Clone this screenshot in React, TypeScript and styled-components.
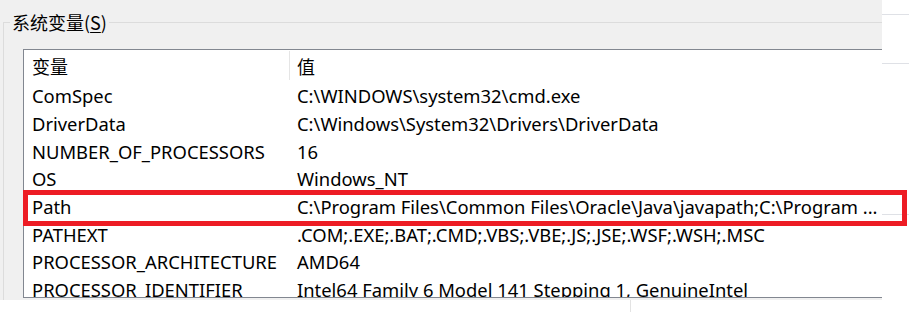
import * as React from 'react';
import styled, { createGlobalStyle } from 'styled-components';

const GlobalStyle = createGlobalStyle`
  body {
    margin: 0;
    background: #fff;
    font-family: 'Segoe UI', 'Noto Sans', 'Noto Sans CJK SC', sans-serif;
    color: #000;
  }
`;

const Screen = styled.div`
  position: relative;
  display: flex;
  flex-direction: column;
  width: 909px;
  height: 312px;
  overflow: hidden;
`;

const TopArea = styled.div`
  display: flex;
  height: 300px;
`;

const DialogPane = styled.div`
  width: 882px;
  padding: 12px 0 0 3px;
  box-sizing: border-box;
  background: #f0f0f0;
`;

const GroupBox = styled.fieldset`
  margin: 0;
  padding: 0 0 0 19px;
  height: 100%;
  min-width: 0;
  box-sizing: border-box;
  border: none;
  border-top: 1px solid #dcdcdc;
  border-left: 1px solid #dcdcdc;
`;

const GroupLabel = styled.legend`
  margin-left: -13px;
  padding: 0 2px;
  font-family: 'Noto Sans CJK SC', sans-serif;
  font-size: 18px;
  line-height: 20px;

  u {
    text-underline-offset: 2px;
  }
`;

const ListBox = styled.div`
  margin-top: 17px;
  height: 249px;
  box-sizing: border-box;
  overflow: hidden;
  background: #fff;
  border: 1px solid #828790;
  border-right: none;
`;

const Grid = styled.div`
  display: grid;
  grid-template-columns: 266px 1fr;
  grid-template-rows: 32px;
  grid-auto-rows: 27.7px;
`;

const HeaderCell = styled.div<{ $divider?: boolean }>`
  display: flex;
  align-items: center;
  margin-top: 1px;
  height: 29px;
  padding-left: ${(p) => (p.$divider ? '8px' : '7px')};
  font-family: 'Noto Sans CJK SC', sans-serif;
  font-size: 18px;
  box-shadow: ${(p) => (p.$divider ? 'inset -1px 0 0 #e5e5e5' : 'none')};
`;

const Cell = styled.div<{ $first?: boolean }>`
  display: flex;
  align-items: center;
  padding-left: ${(p) => (p.$first ? '8px' : '7px')};
  font-size: 18.4px;
  white-space: nowrap;
  overflow: hidden;
`;

const RightStrip = styled.div`
  display: flex;
  flex-direction: column;
  flex: 1;
  background: #fff;
`;

const StripLine = styled.div<{ $gap: number }>`
  margin-top: ${(p) => p.$gap}px;
  height: 1px;
  background: #dfe1e6;
`;

const BottomArea = styled.div`
  flex: 1;
  background: #fff;
  padding-left: 630px;
`;

const Tick = styled.div`
  width: 1px;
  height: 100%;
  background: #e3e3e3;
`;

// red annotation frame drawn over the Path row
const Highlight = styled.div`
  position: absolute;
  left: 23px;
  top: 190px;
  width: 884px;
  height: 36px;
  box-sizing: border-box;
  border: 5px solid #ed1c24;
  pointer-events: none;
`;

const rows: [string, string][] = [
  ['ComSpec', 'C:\\WINDOWS\\system32\\cmd.exe'],
  ['DriverData', 'C:\\Windows\\System32\\Drivers\\DriverData'],
  ['NUMBER_OF_PROCESSORS', '16'],
  ['OS', 'Windows_NT'],
  ['Path', 'C:\\Program Files\\Common Files\\Oracle\\Java\\javapath;C:\\Program ...'],
  ['PATHEXT', '.COM;.EXE;.BAT;.CMD;.VBS;.VBE;.JS;.JSE;.WSF;.WSH;.MSC'],
  ['PROCESSOR_ARCHITECTURE', 'AMD64'],
  ['PROCESSOR_IDENTIFIER', 'Intel64 Family 6 Model 141 Stepping 1, GenuineIntel']
];

const App: React.FunctionComponent = () => {
  return (
    <Screen>
      <GlobalStyle />
      <TopArea>
        <DialogPane>
          <GroupBox>
            <GroupLabel>
              系统变量(<u>S</u>)
            </GroupLabel>
            <ListBox>
              <Grid>
                <HeaderCell $divider>变量</HeaderCell>
                <HeaderCell>值</HeaderCell>
                {rows.map(([name, value]) => (
                  <React.Fragment key={name}>
                    <Cell $first>{name}</Cell>
                    <Cell>{value}</Cell>
                  </React.Fragment>
                ))}
              </Grid>
            </ListBox>
          </GroupBox>
        </DialogPane>
        <RightStrip>
          <StripLine $gap={14} />
          <StripLine $gap={48} />
          <StripLine $gap={150} />
        </RightStrip>
      </TopArea>
      <BottomArea>
        <Tick />
      </BottomArea>
      <Highlight />
    </Screen>
  );
};

export default App;
